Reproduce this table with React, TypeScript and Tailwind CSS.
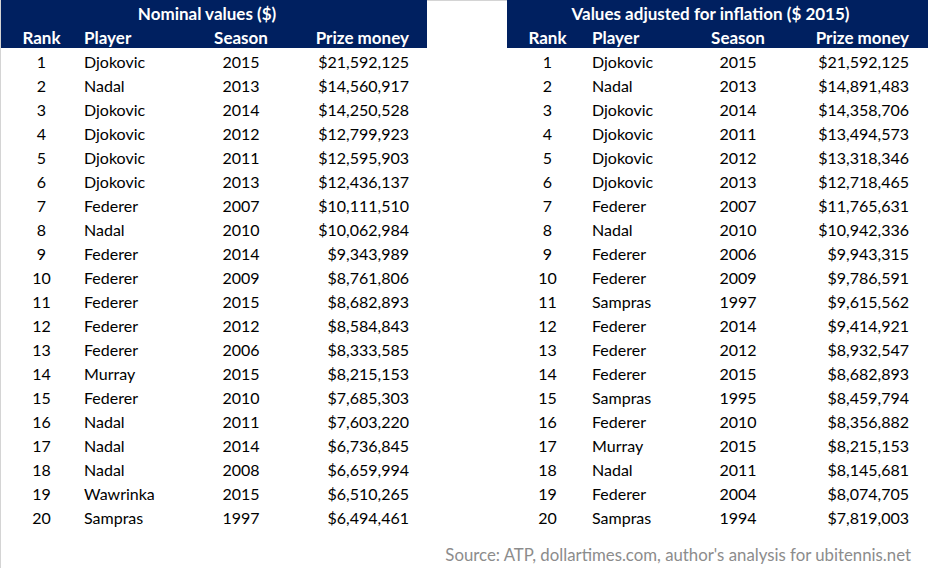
const nominal: [string, string, string][] = [
  ["Djokovic", "2015", "$21,592,125"],
  ["Nadal", "2013", "$14,560,917"],
  ["Djokovic", "2014", "$14,250,528"],
  ["Djokovic", "2012", "$12,799,923"],
  ["Djokovic", "2011", "$12,595,903"],
  ["Djokovic", "2013", "$12,436,137"],
  ["Federer", "2007", "$10,111,510"],
  ["Nadal", "2010", "$10,062,984"],
  ["Federer", "2014", "$9,343,989"],
  ["Federer", "2009", "$8,761,806"],
  ["Federer", "2015", "$8,682,893"],
  ["Federer", "2012", "$8,584,843"],
  ["Federer", "2006", "$8,333,585"],
  ["Murray", "2015", "$8,215,153"],
  ["Federer", "2010", "$7,685,303"],
  ["Nadal", "2011", "$7,603,220"],
  ["Nadal", "2014", "$6,736,845"],
  ["Nadal", "2008", "$6,659,994"],
  ["Wawrinka", "2015", "$6,510,265"],
  ["Sampras", "1997", "$6,494,461"],
];

const adjusted: [string, string, string][] = [
  ["Djokovic", "2015", "$21,592,125"],
  ["Nadal", "2013", "$14,891,483"],
  ["Djokovic", "2014", "$14,358,706"],
  ["Djokovic", "2011", "$13,494,573"],
  ["Djokovic", "2012", "$13,318,346"],
  ["Djokovic", "2013", "$12,718,465"],
  ["Federer", "2007", "$11,765,631"],
  ["Nadal", "2010", "$10,942,336"],
  ["Federer", "2006", "$9,943,315"],
  ["Federer", "2009", "$9,786,591"],
  ["Sampras", "1997", "$9,615,562"],
  ["Federer", "2014", "$9,414,921"],
  ["Federer", "2012", "$8,932,547"],
  ["Federer", "2015", "$8,682,893"],
  ["Sampras", "1995", "$8,459,794"],
  ["Federer", "2010", "$8,356,882"],
  ["Murray", "2015", "$8,215,153"],
  ["Nadal", "2011", "$8,145,681"],
  ["Federer", "2004", "$8,074,705"],
  ["Sampras", "1994", "$7,819,003"],
];

type TableProps = {
  title: string;
  rows: [string, string, string][];
  cols: string;
  width: string;
  playerPad: string;
};

const PrizeTable = ({ title, rows, cols, width, playerPad }: TableProps) => (
  <div className={`${width} shrink-0`}>
    <div className="bg-[#002060] text-white font-bold text-[17px]">
      <div className="h-[27px] flex items-center justify-center pr-[14px] leading-[20px]">
        {title}
      </div>
      <div className={`grid ${cols} h-[21px] items-end leading-[20px]`}>
        <div className="text-center">Rank</div>
        <div className={playerPad}>Player</div>
        <div className="text-center">Season</div>
        <div className="text-right">Prize money</div>
      </div>
    </div>
    {rows.map(([player, season, prize], i) => (
      <div key={i} className={`grid ${cols} h-[24px] items-end leading-[21px]`}>
        <div className="text-center">{i + 1}</div>
        <div className={playerPad}>{player}</div>
        <div className="text-center">{season}</div>
        <div className="text-right">{prize}</div>
      </div>
    ))}
  </div>
);

export default function App() {
  return (
    <div className="w-[929px] h-[568px] bg-white text-black text-[16px] font-['Lato',sans-serif] overflow-hidden">
      <div className="flex">
        <div className="border-l border-[#d4d4d4]">
          <PrizeTable
            title="Nominal values ($)"
            rows={nominal}
            cols="grid-cols-[81px_118px_82px_127px]"
            width="w-[426px]"
            playerPad="pl-[2px]"
          />
        </div>
        <div className="w-[80px] shrink-0 border-t border-[#d4d4d4]" />
        <PrizeTable
          title="Values adjusted for inflation ($ 2015)"
          rows={adjusted}
          cols="grid-cols-[81px_109px_82px_130px]"
          width="w-[421px]"
          playerPad="pl-[4px]"
        />
      </div>
      <div className="h-[40px] border-l border-[#d4d4d4] flex items-end justify-end pr-[18px] pb-[1px] text-[16.8px] text-[#8c8c8c]">
        Source: ATP, dollartimes.com, author's analysis for ubitennis.net
      </div>
    </div>
  );
}
